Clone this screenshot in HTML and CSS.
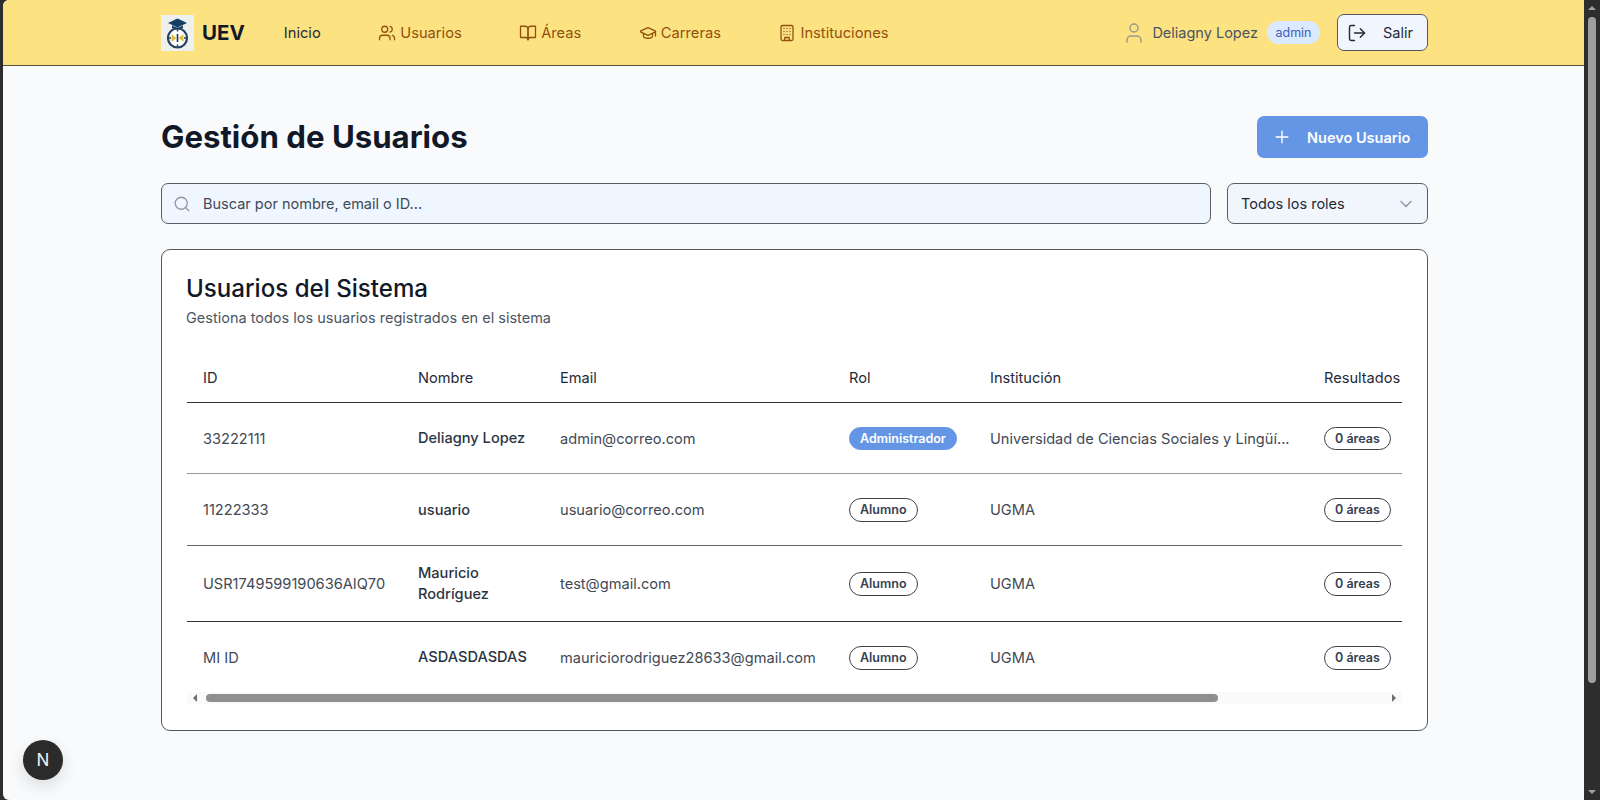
FILE: index.html
```html
<!DOCTYPE html>
<html lang="es">

<head>
    <meta charset="UTF-8">
    <meta name="viewport" content="width=device-width, initial-scale=1.0">
    <title>UEV - Usuarios</title>
    <link rel="stylesheet" href="styles.css">
</head>

<body>
    <div class="window">
        <header class="topbar">
            <div class="topbar-inner">
                <div class="brand">
                    <svg class="brand-logo" viewBox="0 0 33 36">
                        <rect width="33" height="36" fill="#eef0ee" />
                        <circle cx="16.5" cy="23" r="9.5" fill="#fff" stroke="#24445f" stroke-width="2.200" />
                        <path d="M16.500 13.500v3M16.500 29.500v3M7 23h3M23 23h3" stroke="#24445f" stroke-width="1.500" />
                        <path d="M10.500 19l5 4-5 4zM22.500 19l-5 4 5 4z" fill="#e0bf3c" />
                        <path d="M16.500 19v8" stroke="#1d3a55" stroke-width="1.600" />
                        <path d="M7 8l9.500-4.500L26 8l-9.500 4.500z" fill="#143f63" />
                        <path d="M11 10.500v2.500c2.500 1.500 8.500 1.500 11 0v-2.500l-5.500 2.500z" fill="#143f63" />
                    </svg>
                    <span class="brand-name">UEV</span>
                </div>
                <nav class="nav">
                    <a class="nav-link nav-home">Inicio</a>
                    <a class="nav-link">
                        <svg class="icon" viewBox="0 0 24 24"><path d="M16 21v-2a4 4 0 0 0-4-4H6a4 4 0 0 0-4 4v2" /><circle cx="9" cy="7" r="4" /><path d="M22 21v-2a4 4 0 0 0-3-3.870" /><path d="M16 3.130a4 4 0 0 1 0 7.750" /></svg>
                        Usuarios
                    </a>
                    <a class="nav-link">
                        <svg class="icon" viewBox="0 0 24 24"><path d="M2 3h6a4 4 0 0 1 4 4v14a3 3 0 0 0-3-3H2z" /><path d="M22 3h-6a4 4 0 0 0-4 4v14a3 3 0 0 1 3-3h7z" /></svg>
                        Áreas
                    </a>
                    <a class="nav-link">
                        <svg class="icon" viewBox="0 0 24 24"><path d="M21.420 10.922a1 1 0 0 0-.019-1.838L12.830 5.180a2 2 0 0 0-1.660 0L2.600 9.080a1 1 0 0 0 0 1.832l8.570 3.908a2 2 0 0 0 1.660 0z" /><path d="M22 10v6" /><path d="M6 12.500V16a6 3 0 0 0 12 0v-3.500" /></svg>
                        Carreras
                    </a>
                    <a class="nav-link">
                        <svg class="icon" viewBox="0 0 24 24"><rect x="4" y="2" width="16" height="20" rx="2" /><path d="M9 22v-4h6v4" /><path d="M8 6h.01M12 6h.01M16 6h.01M8 10h.01M12 10h.01M16 10h.01M8 14h.01M12 14h.01M16 14h.01" /></svg>
                        Instituciones
                    </a>
                </nav>
                <div class="session">
                    <svg class="icon icon-user" viewBox="0 0 24 24"><path d="M19 21v-2a4 4 0 0 0-4-4H9a4 4 0 0 0-4 4v2" /><circle cx="12" cy="7" r="4" /></svg>
                    <span class="session-name">Deliagny Lopez</span>
                    <span class="session-role">admin</span>
                    <button class="logout">
                        <svg class="icon" viewBox="0 0 24 24"><path d="M9 21H5a2 2 0 0 1-2-2V5a2 2 0 0 1 2-2h4" /><path d="M16 17l5-5-5-5" /><path d="M21 12H9" /></svg>
                        Salir
                    </button>
                </div>
            </div>
        </header>

        <main class="content">
            <div class="page-head">
                <h1>Gestión de Usuarios</h1>
                <button class="new-user">
                    <svg class="icon" viewBox="0 0 24 24"><path d="M5 12h14M12 5v14" /></svg>
                    Nuevo Usuario
                </button>
            </div>

            <div class="filters">
                <div class="search">
                    <svg class="icon" viewBox="0 0 24 24"><circle cx="11" cy="11" r="8" /><path d="M21 21l-4.300-4.300" /></svg>
                    <span>Buscar por nombre, email o ID...</span>
                </div>
                <div class="role-select">
                    <span>Todos los roles</span>
                    <svg class="icon" viewBox="0 0 24 24"><path d="M6 9l6 6 6-6" /></svg>
                </div>
            </div>

            <section class="card">
                <h2>Usuarios del Sistema</h2>
                <p class="card-sub">Gestiona todos los usuarios registrados en el sistema</p>

                <div class="table-wrap">
                    <table>
                        <colgroup>
                            <col class="col-id">
                            <col class="col-name">
                            <col class="col-email">
                            <col class="col-role">
                            <col class="col-inst">
                            <col class="col-res">
                        </colgroup>
                        <thead>
                            <tr>
                                <th>ID</th>
                                <th>Nombre</th>
                                <th>Email</th>
                                <th>Rol</th>
                                <th>Institución</th>
                                <th>Resultados</th>
                            </tr>
                        </thead>
                        <tbody>
                            <tr>
                                <td>33222111</td>
                                <td class="name">Deliagny Lopez</td>
                                <td>admin@correo.com</td>
                                <td><span class="pill pill-blue">Administrador</span></td>
                                <td>Universidad de Ciencias Sociales y Lingüí...</td>
                                <td><span class="pill">0 áreas</span></td>
                            </tr>
                            <tr>
                                <td>11222333</td>
                                <td class="name">usuario</td>
                                <td>usuario@correo.com</td>
                                <td><span class="pill">Alumno</span></td>
                                <td>UGMA</td>
                                <td><span class="pill">0 áreas</span></td>
                            </tr>
                            <tr>
                                <td>USR1749599190636AIQ70</td>
                                <td class="name">Mauricio Rodríguez</td>
                                <td>test@gmail.com</td>
                                <td><span class="pill">Alumno</span></td>
                                <td>UGMA</td>
                                <td><span class="pill">0 áreas</span></td>
                            </tr>
                            <tr>
                                <td>MI ID</td>
                                <td class="name">ASDASDASDAS</td>
                                <td>mauriciorodriguez28633@gmail.com</td>
                                <td><span class="pill">Alumno</span></td>
                                <td>UGMA</td>
                                <td><span class="pill">0 áreas</span></td>
                            </tr>
                        </tbody>
                    </table>
                </div>

                <div class="hscroll">
                    <span class="arrow-left"></span>
                    <span class="hscroll-thumb"></span>
                    <span class="arrow-right"></span>
                </div>
            </section>
        </main>

        <div class="next-badge">N</div>
    </div>

    <div class="vscroll">
        <span class="arrow-up"></span>
        <span class="vscroll-thumb"></span>
        <span class="arrow-down"></span>
    </div>
</body>

</html>
```

FILE: styles.css
```css
* {
    box-sizing: border-box;
}

html,
body {
    height: 100%;
    margin: 0;
    overflow: hidden;
}

body {
    display: flex;
    padding-left: 3px;
    background-color: #2d2d2d;
    font-family: Inter, "Liberation Sans", sans-serif;
    font-size: 14.5px;
    color: #1f2937;
}

.window {
    position: relative;
    flex: 1;
    min-width: 0;
    background-color: #f8fafc;
    border-radius: 6px 0 0 6px;
    overflow: hidden;
}

.icon {
    width: 20px;
    height: 20px;
    flex: none;
    fill: none;
    stroke: currentColor;
    stroke-width: 1.700;
    stroke-linecap: round;
    stroke-linejoin: round;
}

/* top bar */
.topbar {
    height: 66px;
    background-color: #fde281;
    border-bottom: 1px solid #57523c;
}

.topbar-inner {
    width: 1267px;
    height: 65px;
    margin-left: 158px;
    display: flex;
    align-items: center;
}

.brand {
    display: flex;
    align-items: center;
    gap: 8px;
}

.brand-logo {
    width: 33px;
    height: 36px;
}

.brand-name {
    font-size: 20.5px;
    font-weight: 700;
    color: #111827;
}

.nav {
    display: flex;
    align-items: center;
    gap: 57.500px;
    margin-left: 39px;
    font-size: 14.7px;
}

.nav-link {
    display: flex;
    align-items: center;
    gap: 4px;
    color: #92500f;
}

.nav-link .icon {
    width: 18px;
    height: 18px;
}

.nav-home {
    color: #1f2937;
}

.session {
    margin-left: auto;
    display: flex;
    align-items: center;
}

.icon-user {
    width: 24px;
    height: 24px;
    stroke-width: 1.500;
    color: #9a9b8a;
}

.session-name {
    margin-left: 6px;
    color: #4b5563;
}

.session-role {
    margin-left: 9px;
    padding: 4px 8.500px;
    border-radius: 13px;
    background-color: #dbeafe;
    font-size: 12.5px;
    color: #3f5db8;
}

.logout {
    width: 91px;
    height: 37px;
    margin-left: 17px;
    display: flex;
    align-items: center;
    gap: 16px;
    padding: 0 0 0 9px;
    border: 1px solid #55585c;
    border-radius: 7px;
    background-color: #f1f6fe;
    font: inherit;
    color: #1f2937;
}

/* page */
.content {
    width: 1267px;
    margin-left: 158px;
    padding-top: 50px;
}

.page-head {
    display: flex;
    align-items: center;
    justify-content: space-between;
}

h1 {
    margin: 0;
    font-size: 31.2px;
    font-weight: 700;
    color: #111827;
}

.new-user {
    width: 171px;
    height: 42px;
    display: flex;
    align-items: center;
    gap: 15px;
    padding: 0 0 0 15px;
    border: none;
    border-radius: 7px;
    background-color: #6596e6;
    font: inherit;
    font-weight: 600;
    color: #fff;
}

.filters {
    display: flex;
    gap: 16px;
    margin-top: 25px;
}

.search,
.role-select {
    height: 41px;
    display: flex;
    align-items: center;
    border: 1px solid #595e66;
    border-radius: 7px;
    background-color: #eff6ff;
}

.search {
    flex: 1;
    padding-left: 11px;
    gap: 12px;
    color: #414956;
}

.search .icon {
    width: 18px;
    height: 18px;
    color: #8f98a3;
}

.role-select {
    width: 201px;
    padding: 0 11px 0 13px;
    justify-content: space-between;
    background-color: #f1f6fd;
}

.role-select .icon {
    color: #8f98a3;
}

/* card with table */
.card {
    height: 482px;
    margin-top: 25px;
    padding: 25px 25px 0 24px;
    border: 1px solid #55585c;
    border-radius: 9px;
    background-color: #fff;
}

h2 {
    margin: 0;
    font-size: 24.1px;
    line-height: 28px;
    font-weight: 500;
    color: #111827;
}

.card-sub {
    margin: 5px 0 0;
    line-height: 20px;
    color: #4b5563;
}

.table-wrap {
    margin: 25px 0 0 1px;
    overflow: hidden;
}

table {
    width: 1240px;
    table-layout: fixed;
    border-collapse: collapse;
}

.col-id {
    width: 215px;
}

.col-name {
    width: 142px;
}

.col-email {
    width: 289px;
}

.col-role {
    width: 141px;
}

.col-inst {
    width: 334px;
}

.col-res {
    width: 119px;
}

th {
    height: 49px;
    padding: 2px 16px 0;
    text-align: left;
    font-weight: 400;
    font-size: 14.6px;
    color: #1f2937;
    border-bottom: 1px solid #333;
}

td {
    padding: 2px 16px 0;
    height: 71px;
    font-size: 14.6px;
    color: #414956;
    border-bottom: 1px solid #666;
    white-space: nowrap;
}

td.name {
    white-space: normal;
    font-weight: 500;
    color: #2b3442;
    line-height: 21px;
}

tbody tr:first-child td {
    border-bottom-color: #999;
}

tbody tr:nth-child(2) td {
    height: 72px;
}

tbody tr:nth-child(3) td {
    height: 76px;
    border-bottom-color: #333;
}

tbody tr:last-child td {
    height: 71px;
    border-bottom: none;
}

.pill {
    display: inline-block;
    padding: 3px 10px;
    border: 1px solid #3d424a;
    border-radius: 12px;
    font-size: 12.5px;
    font-weight: 600;
    line-height: 15.500px;
    color: #374151;
}

.pill-blue {
    background-color: #6596e6;
    border-color: #6596e6;
    color: #fff;
}

/* fake scrollbars */
.hscroll {
    height: 12px;
    margin-left: 1px;
    display: flex;
    align-items: center;
    background-color: #fafafa;
}

.hscroll-thumb {
    width: 1012px;
    height: 8px;
    margin-left: 9px;
    border-radius: 4px;
    background-color: #8f8f8f;
}

.arrow-left {
    margin-left: 6px;
    border: 4px solid transparent;
    border-left: none;
    border-right-color: #707070;
}

.arrow-right {
    margin-left: auto;
    margin-right: 6px;
    border: 4px solid transparent;
    border-right: none;
    border-left-color: #707070;
}

.vscroll {
    width: 16px;
    flex: none;
    display: flex;
    flex-direction: column;
    align-items: center;
    background-color: #2d2d2d;
}

.arrow-up {
    margin-top: 6px;
    border: 4px solid transparent;
    border-top: none;
    border-bottom-color: #a0a0a0;
}

.vscroll-thumb {
    width: 8px;
    height: 666px;
    margin-top: 7px;
    border-radius: 4px;
    background-color: #9f9f9f;
}

.arrow-down {
    margin-top: auto;
    margin-bottom: 6px;
    border: 4px solid transparent;
    border-bottom: none;
    border-top-color: #a0a0a0;
}

/* dev tools button */
.next-badge {
    position: absolute;
    left: 20px;
    bottom: 20px;
    width: 40px;
    height: 40px;
    display: flex;
    align-items: center;
    justify-content: center;
    border-radius: 50%;
    background-color: #2b2b2b;
    box-shadow: 0 6px 16px rgba(0, 0, 0, 0.12);
    font-size: 17px;
    font-weight: 400;
    color: #f2f2f2;
}
```
